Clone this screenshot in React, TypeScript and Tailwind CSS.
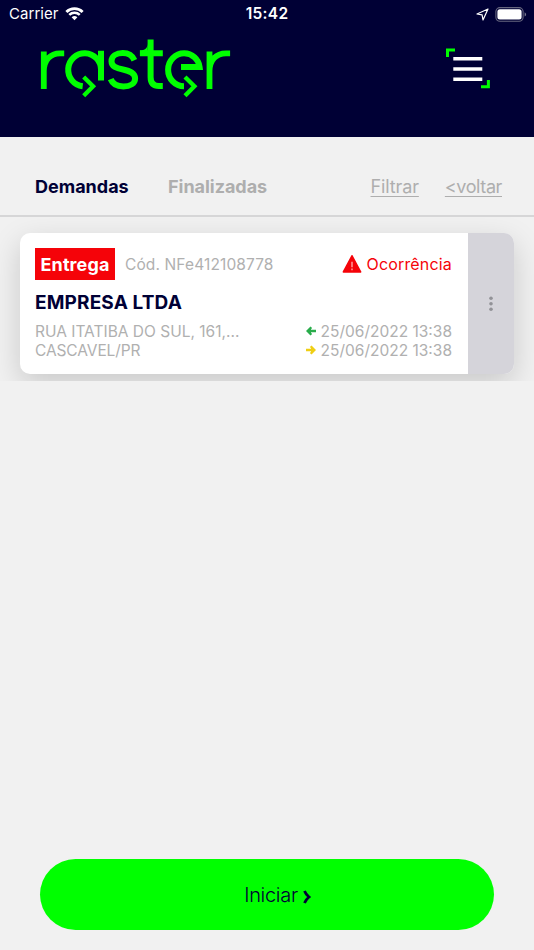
import React from "react";

function Logo() {
  return (
    <svg
      className="block"
      width="192"
      height="60"
      viewBox="40 39 192 60"
      fill="none"
      stroke="#00ff00"
      strokeWidth="6"
      aria-label="raster"
    >
      <path d="M43.8 89V51.5M43.8 71C44 60 50.3 53.3 60 53.3H64.2" strokeWidth="5.8" />
      <path d="M101 80.4V50.8M101 69.8A16.4 16.6 0 1 0 82.7 86.3" />
      <path d="M83.7 76.9L93.1 86.3L83.7 95.7" strokeWidth="4.3" />
      <path d="M134.4 60.3C132.4 55.7 128.2 53.1 122.8 53.1C116.4 53.1 111.5 56 111.5 61.2C111.5 66.7 116.6 68.2 123 69.5C130.2 71 135.1 73 135.1 78.4C135.1 83.6 130 86.4 123.4 86.4C117.2 86.4 112.7 84.4 110.7 79.2" />
      <path d="M150.6 39.4V77C150.6 83 153.4 86 159 86H162.8M139.9 53.3H162.8" />
      <path d="M140 50.4C144.8 50.4 147.7 48 147.7 43.4V53H140Z" fill="#00ff00" stroke="none" />
      <path d="M181 67H199.6A15.6 15.6 0 0 0 184.2 53.3A16 16.5 0 0 0 184 86.3" />
      <path d="M185 76.9L194.4 86.3L185 95.7" strokeWidth="4.3" />
      <path d="M209.5 89V51.5M209.5 71C209.7 60 216 53.3 226 53.3H230.1" strokeWidth="5.8" />
    </svg>
  );
}

function Wifi() {
  return (
    <svg className="block" width="19" height="14" viewBox="0 0 20 15" fill="none" stroke="#fff">
      <path d="M1.3 5.3A12.4 12.4 0 0 1 18.7 5.3" strokeWidth="3.1" />
      <path d="M4.4 8.5A8 8 0 0 1 15.6 8.5" strokeWidth="2.7" />
      <path d="M6.9 11.1A4.4 4.4 0 0 1 13.1 11.1L10 14.3Z" fill="#fff" stroke="none" />
    </svg>
  );
}

function StatusBar() {
  return (
    <div className="grid h-7 grid-cols-3 items-center pl-[9px] pr-[7px] text-[15px] text-white">
      <div className="flex items-center gap-[6px]">
        <span className="tracking-[0.05px]">Carrier</span>
        <Wifi />
      </div>
      <span className="-ml-0.5 text-center text-[15.5px] font-semibold tracking-[0.3px]">15:42</span>
      <div className="flex items-center justify-end gap-[6px]">
        <svg width="13" height="13" viewBox="0 0 13 13" fill="none" stroke="#fff" strokeWidth="1.2" strokeLinejoin="round">
          <path d="M12 1L1 6L6.1 6.9L7 12Z" />
        </svg>
        <svg width="32" height="15" viewBox="0 0 32 15">
          <rect x=".9" y=".6" width="27.2" height="13.6" rx="4" fill="none" stroke="#66667f" strokeWidth="1.1" />
          <rect x="2.4" y="2.2" width="24.2" height="10.4" rx="2.5" fill="#fff" />
          <path d="M29.6 5.2C31.6 6 31.6 8.8 29.6 9.6Z" fill="#77778f" />
        </svg>
      </div>
    </div>
  );
}

function MenuIcon() {
  return (
    <svg className="block" width="44" height="41" viewBox="0 0 44 41" fill="none">
      <path d="M1.5 9V2H9M42.4 32V38.8H35" stroke="#00ff00" strokeWidth="3" />
      <path d="M7.3 10.7H36.3M7.3 20.9H36.3M7.3 31.2H36.3" stroke="#fff" strokeWidth="3.5" />
    </svg>
  );
}

function Arrow({ className }: { className: string }) {
  return (
    <svg className={className} width="10" height="10" viewBox="0 0 10 10" fill="none" stroke="currentColor" strokeWidth="2.3">
      <path d="M10 5H2M5.3 1.2L1.6 5L5.3 8.8" />
      <path d="M5 2V8L2 5Z" fill="currentColor" stroke="none" />
    </svg>
  );
}

export default function App() {
  return (
    <div className="flex h-[950px] w-[534px] flex-col overflow-hidden bg-[#f1f1f1] font-['Inter','Liberation_Sans',sans-serif]">
      <header className="h-[137px] shrink-0 bg-[#000035]">
        <StatusBar />
        <div className="flex items-start justify-between pl-10 pr-11 pt-[11px]">
          <Logo />
          <button className="mt-[9px]" aria-label="Menu">
            <MenuIcon />
          </button>
        </div>
      </header>

      <nav className="flex h-20 shrink-0 items-center justify-between border-b-2 border-[#d6d6d7] pl-[35px] pr-8 pt-[21px] text-[18px] leading-6 text-[#aeaeae]">
        <div className="flex gap-[39px] font-bold">
          <span className="w-[94px] text-[#000035]">Demandas</span>
          <span className="tracking-[-0.03px]">Finalizadas</span>
        </div>
        <div className="flex gap-[26px] underline underline-offset-[3px]">
          <span className="tracking-[-0.12px]">Filtrar</span>
          <span className="tracking-[-0.4px]">&lt;voltar</span>
        </div>
      </nav>

      <main className="h-[164px] shrink-0 overflow-hidden px-5 pt-4">
        <article className="flex h-[141px] w-[494px] overflow-hidden rounded-[10px] bg-white shadow-[0_10px_30px_rgba(0,0,0,0.17)]">
          <div className="flex w-[448px] flex-col pl-[15px] pr-4 pt-[15px]">
            <div className="flex h-8 items-center justify-between">
              <div className="flex items-center gap-[10px]">
                <span className="flex h-8 w-20 items-center justify-center bg-[#f50309] text-[18px] font-bold tracking-[0.1px] text-white">Entrega</span>
                <span className="mt-px text-[15.5px] tracking-[0.12px] text-[#b0b0b0]">Cód. NFe412108778</span>
              </div>
              <div className="flex items-center gap-[5px] text-[16px] text-[#f50309]">
                <svg width="20" height="18" viewBox="0 0 20 18">
                  <path d="M10 .8L18.6 17H1.4Z" fill="currentColor" stroke="currentColor" strokeWidth="1.6" strokeLinejoin="round" />
                  <path d="M10 6.8V12.2M10 13.6V15.3" stroke="#ff9c9c" strokeWidth="1.5" />
                </svg>
                <span className="tracking-[0.17px]">Ocorrência</span>
              </div>
            </div>
            <h2 className="mt-[11px] text-[19px] font-bold leading-6 tracking-[0.15px] text-[#000035]">EMPRESA LTDA</h2>
            <div className="mt-[8px] flex justify-between text-[15.5px] leading-[18.5px] text-[#b0b0b0]">
              <div className="flex flex-col">
                <span>RUA ITATIBA DO SUL, 161,...</span>
                <span className="tracking-[-0.1px]">CASCAVEL/PR</span>
              </div>
              <div className="flex flex-col">
                <div className="flex items-center gap-[5px]">
                  <Arrow className="-mt-0.5 text-[#29ac4b]" />
                  <span>25/06/2022 13:38</span>
                </div>
                <div className="flex items-center gap-[5px]">
                  <Arrow className="-mt-0.5 rotate-180 text-[#efce14]" />
                  <span>25/06/2022 13:38</span>
                </div>
              </div>
            </div>
          </div>
          <button className="flex flex-1 items-center justify-center bg-[#d5d4da]" aria-label="Opções">
            <svg width="4" height="16" viewBox="0 0 4 16" fill="#929297">
              <circle cx="2" cy="2.2" r="1.8" />
              <circle cx="2" cy="7.7" r="1.8" />
              <circle cx="2" cy="13.2" r="1.8" />
            </svg>
          </button>
        </article>
      </main>

      <footer className="mt-auto px-10 pb-5">
        <button className="flex h-[71px] w-[454px] items-center justify-center gap-[5px] rounded-full bg-[#00ff00] pl-[21px] text-[20px] font-light text-[#000035]">
          <span className="tracking-[-0.3px]">Iniciar</span>
          <svg className="mt-1" width="8" height="14" viewBox="0 0 8 14" fill="none" stroke="currentColor" strokeWidth="2.8">
            <path d="M1.5 1C2.7 4 4 5.4 6 7C4 8.6 2.7 10 1.5 13" />
          </svg>
        </button>
      </footer>
    </div>
  );
}
